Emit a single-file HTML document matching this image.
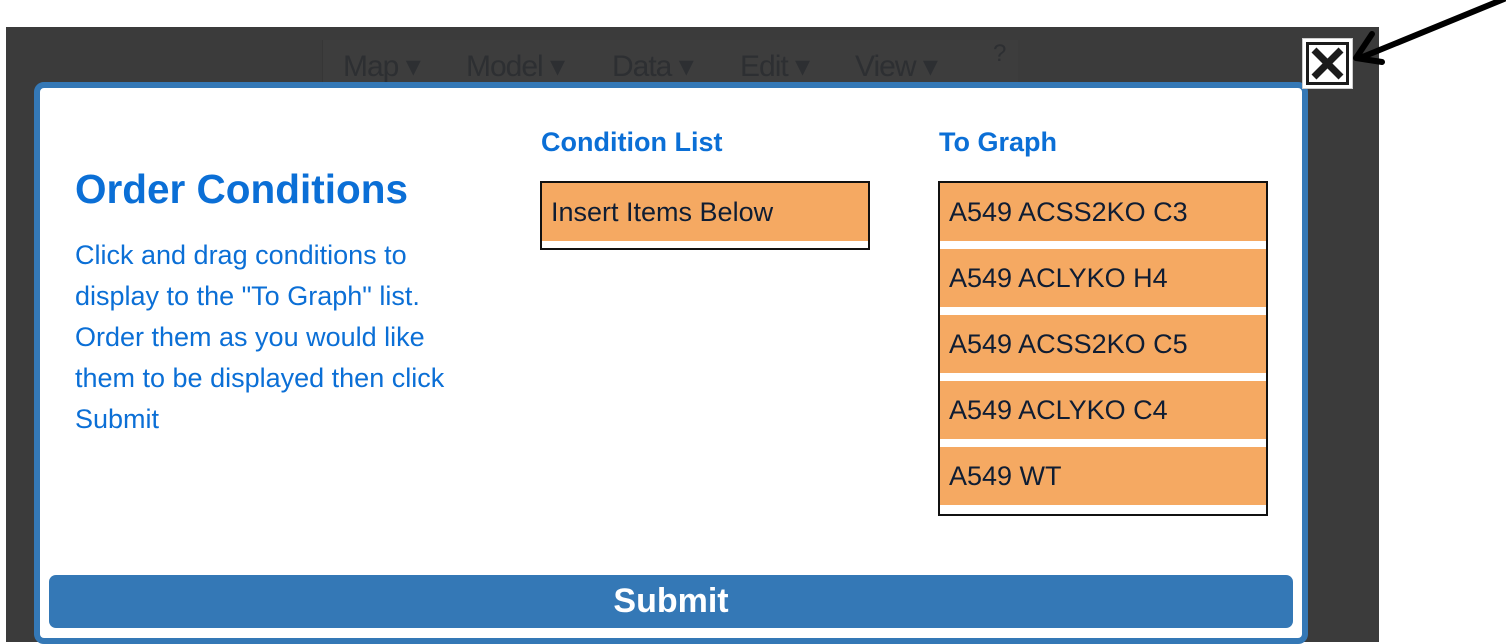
<!DOCTYPE html>
<html><head><style>
*{margin:0;padding:0;box-sizing:border-box}
body{width:1506px;height:642px;background:#fff;position:relative;overflow:hidden;font-family:"Liberation Sans",Arial,sans-serif}
.bg{position:absolute;left:6px;top:27px;width:1373px;height:615px;background:#3b3b3b}
.bar{position:absolute;left:322px;top:40px;width:696px;height:50px;background:#3d3d3d;border-left:1px solid #363636}
.menu{position:absolute;top:49px;font-size:30px;color:#2d2f32;letter-spacing:-1px}
.modal{position:absolute;left:34px;top:82px;width:1274px;height:562px;border:6px solid #3478b6;border-radius:10px;background:#fff}
.blue{color:#0b6fd6}
h1{position:absolute;left:75px;top:166px;font-size:40.5px;font-weight:bold}
.p{position:absolute;left:75px;top:235px;font-size:27px;line-height:41px;width:400px}
h2{position:absolute;top:127px;font-size:27px;font-weight:bold}
.box{position:absolute;border:2px solid #111;background:#fff;width:330px}
.item{height:58px;background:#f5a962;color:#0f1d33;font-size:27px;padding-left:9px;line-height:58px;margin-bottom:8px}
.btn{position:absolute;left:49px;top:575px;width:1244px;height:53px;background:#3478b6;border-radius:7px;color:#fff;font-size:34px;font-weight:bold;text-align:center;line-height:53px}
.close{position:absolute;left:1302px;top:38px;width:51px;height:51px;background:#fff;border:1px solid #ccc}
.close div{position:absolute;left:3px;top:3px;width:43px;height:43px;border:3px solid #1b1b1b}
</style></head><body>
<div class="bg"></div>
<div class="bar"></div>
<div class="menu" style="left:343px">Map ▾</div>
<div class="menu" style="left:466px">Model ▾</div>
<div class="menu" style="left:612px">Data ▾</div>
<div class="menu" style="left:740px">Edit ▾</div>
<div class="menu" style="left:855px">View ▾</div>
<div class="menu" style="left:993px;top:40px;font-size:24px">?</div>
<div class="modal"></div>
<h1 class="blue">Order Conditions</h1>
<div class="p blue">Click and drag conditions to display to the "To Graph" list. Order them as you would like them to be displayed then click Submit</div>
<h2 class="blue" style="left:541px">Condition List</h2>
<h2 class="blue" style="left:939px">To Graph</h2>
<div class="box" style="left:540px;top:181px;height:69px"><div class="item">Insert Items Below</div></div>
<div class="box" style="left:938px;top:181px;height:335px">
<div class="item">A549 ACSS2KO C3</div>
<div class="item">A549 ACLYKO H4</div>
<div class="item">A549 ACSS2KO C5</div>
<div class="item">A549 ACLYKO C4</div>
<div class="item">A549 WT</div>
</div>
<div class="btn">Submit</div>
<div class="close"><div><svg width="37" height="37" viewBox="0 0 37 37"><path d="M5 5L32 32M32 5L5 32" stroke="#1b1b1b" stroke-width="7" stroke-linecap="butt"/></svg></div></div>
<svg style="position:absolute;left:0;top:0" width="1506" height="642"><path d="M1504 -1L1360 58M1372 34L1356 58L1382 62" stroke="#000" stroke-width="6" fill="none" stroke-linecap="round" stroke-linejoin="round"/></svg>
</body></html>
